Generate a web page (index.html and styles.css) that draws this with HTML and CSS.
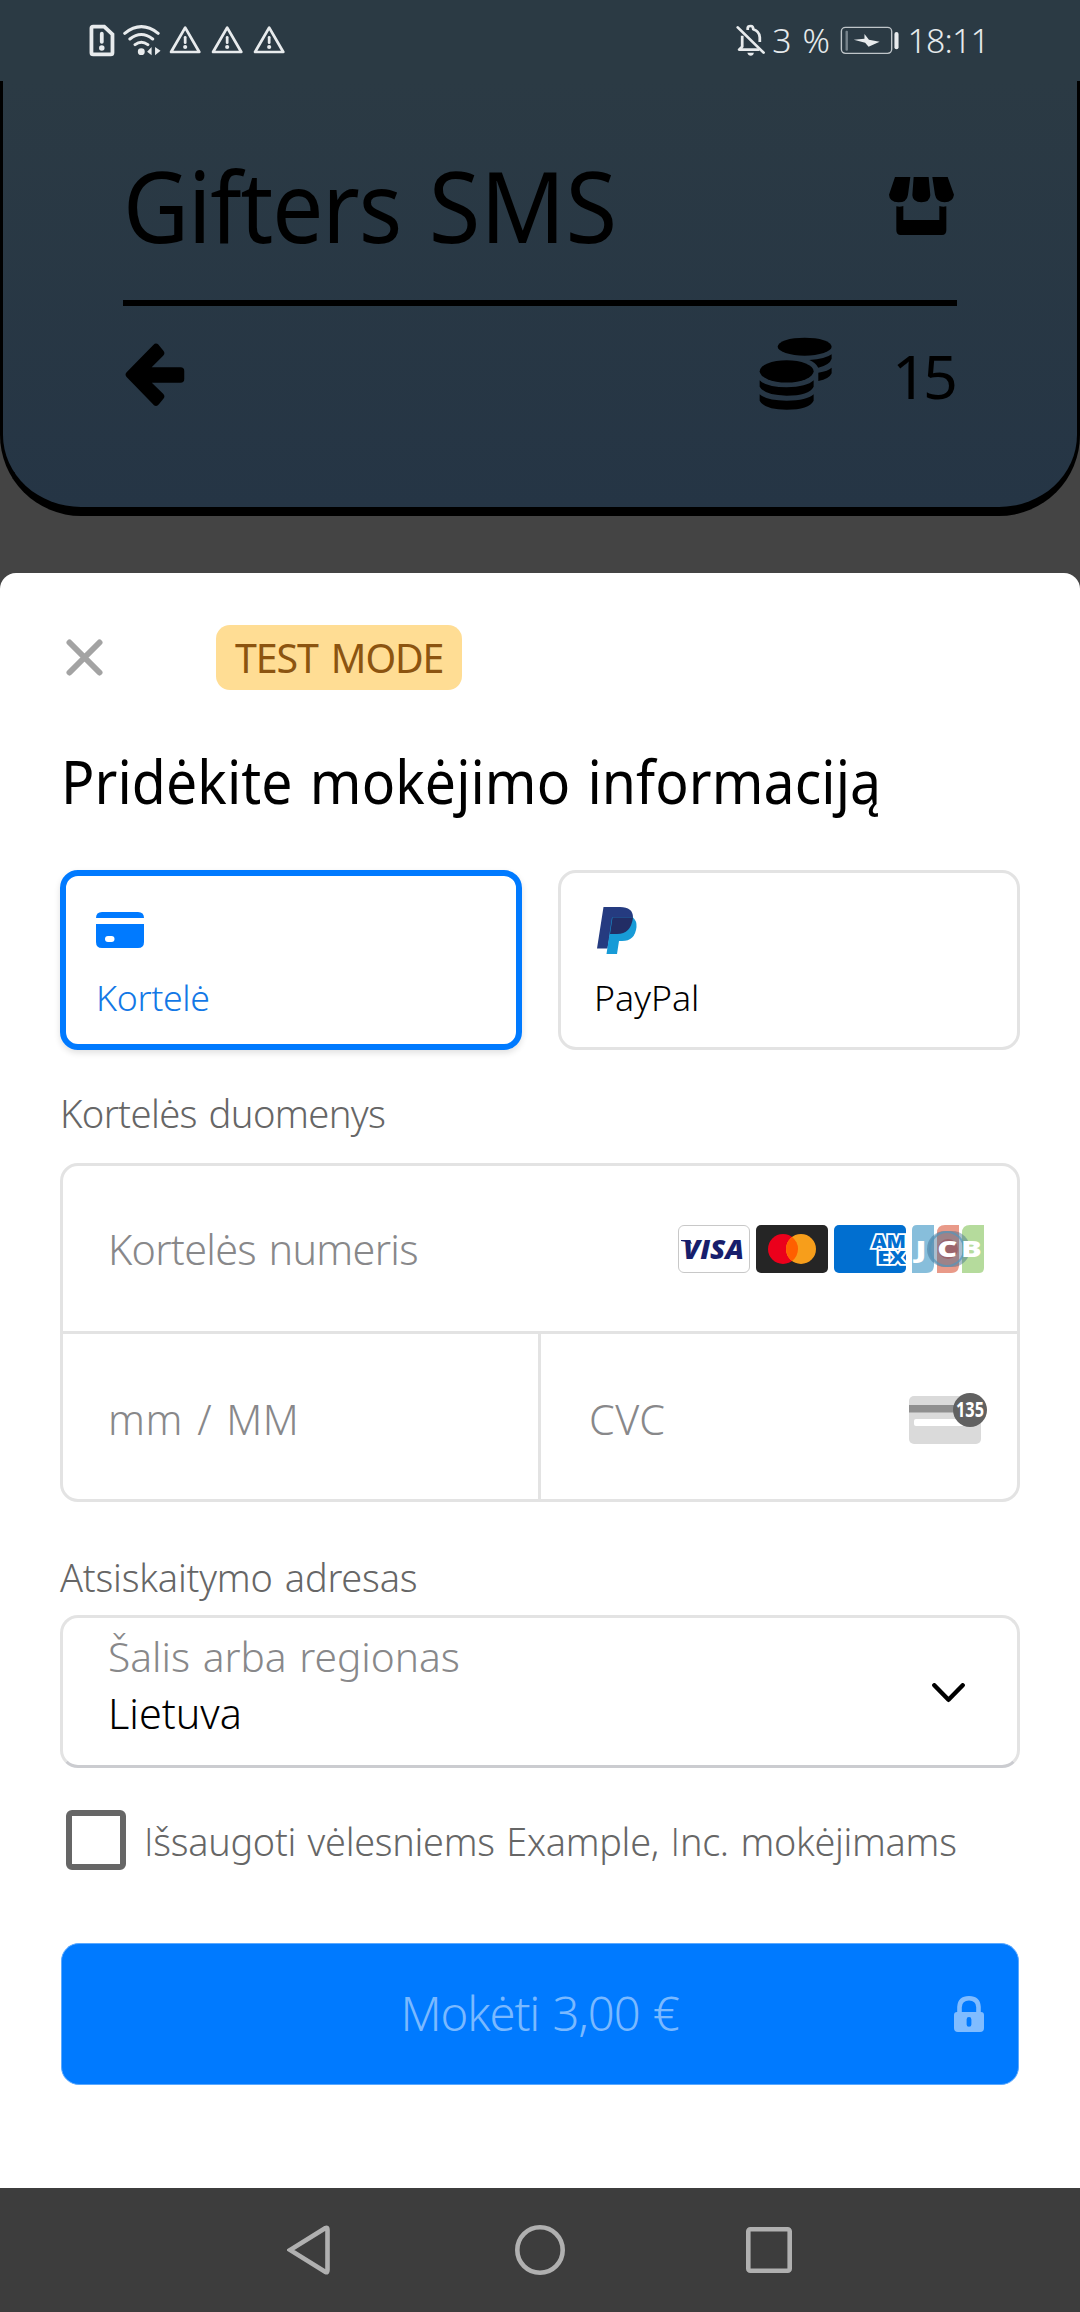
FILE: index.html
```html
<!DOCTYPE html>
<html lang="lt">
<head>
<meta charset="utf-8">
<title>Gifters SMS</title>
<link rel="stylesheet" href="styles.css">
</head>
<body>
<div class="screen">
  <div class="statusbar">
    <div class="status-left">
      <svg class="s-sim" viewBox="255 60 85 120" preserveAspectRatio="none" fill="none" stroke="#e8ebed"><path d="M270 80H302L326 103V158Q326 163 321 163H270Q265 163 265 158V85Q265 80 270 80Z" stroke-width="11"/><path d="M295 101V126" stroke-width="11" stroke-linecap="round"/><circle cx="295" cy="144" r="8" fill="#e8ebed" stroke="none"/></svg>
      <svg class="s-wifi" viewBox="355 60 115 120" preserveAspectRatio="none" fill="none" stroke="#e8ebed" stroke-width="9" stroke-linecap="round"><path d="M363 100Q411 60 460 100M378 117Q411 90 444 117M393 134Q411 120 430 134"/><circle cx="411" cy="155" r="10" fill="#e8ebed" stroke="none"/><path d="M441 141V166L428 155ZM451 141L467 152L451 166Z" fill="#e8ebed" stroke="none"/></svg>
      <svg class="s-warn" viewBox="490 60 95 120" preserveAspectRatio="none" fill="none" stroke="#e8ebed" stroke-width="8" stroke-linejoin="round"><path d="M537 83L496 156H578Z"/><path d="M537 112V128" stroke-linecap="round"/><circle cx="537" cy="141" r="6" fill="#e8ebed" stroke="none"/></svg>
      <svg class="s-warn" viewBox="490 60 95 120" preserveAspectRatio="none" fill="none" stroke="#e8ebed" stroke-width="8" stroke-linejoin="round"><path d="M537 83L496 156H578Z"/><path d="M537 112V128" stroke-linecap="round"/><circle cx="537" cy="141" r="6" fill="#e8ebed" stroke="none"/></svg>
      <svg class="s-warn" viewBox="490 60 95 120" preserveAspectRatio="none" fill="none" stroke="#e8ebed" stroke-width="8" stroke-linejoin="round"><path d="M537 83L496 156H578Z"/><path d="M537 112V128" stroke-linecap="round"/><circle cx="537" cy="141" r="6" fill="#e8ebed" stroke="none"/></svg>
    </div>
    <div class="status-right">
      <svg class="s-bell" viewBox="570 60 85 120" preserveAspectRatio="none" fill="none" stroke="#e8ebed" stroke-width="8"><path d="M575 82L650 158" stroke-linecap="round"/><path d="M604 90V84Q604 78 613 78Q620 78 620 88Q638 94 639 112V126M588 107V140L579 149H638" stroke-linejoin="round"/><path d="M603 158H622Q620 167 613 167Q605 167 603 158Z" fill="#e8ebed" stroke="none"/></svg>
      <span class="s-pct">3 %</span>
      <svg class="s-batt" viewBox="872 60 173 120" preserveAspectRatio="none"><rect x="876" y="82" width="146" height="78" rx="12" fill="none" stroke="#bfc5c9" stroke-width="4"/><rect x="888" y="92" width="7" height="60" rx="3" fill="#78848c"/><path d="M943 102L956 119L987 125L955 140L945 128L912 119L943 116Z" fill="#e8ebed"/><rect x="1030" y="96" width="12" height="52" rx="6" fill="#e8ebed"/></svg>
      <span class="s-time">18:11</span>
    </div>
  </div>

  <header class="header">
    <div class="header-top">
      <h1 class="title"><span class="title-name">Gifters</span> <span class="title-sms">SMS</span></h1>
      <svg class="shop" viewBox="746 231 195 174"><path d="M764 231H810L803 284Q800 307 774 307Q747 305 746 284ZM820 231H865L870 286Q868 307 843 307Q817 306 816 286ZM876 231H922L941 284Q938 306 913 307Q888 306 884 284ZM768 319Q779 322 789 318V360H897V318Q908 322 918 319V391Q918 405 905 405H781Q768 405 768 391Z"/></svg>
    </div>
    <div class="header-bottom">
      <svg class="back" viewBox="124 341 64 68"><path d="M130.500 374.700L157 347.500L161.500 353L143.500 371H181.500V379H143.500L161.500 396.500L157 402Z" stroke="#000" stroke-width="7.500" stroke-linejoin="round"/></svg>
      <div class="balance">
        <svg class="coins" viewBox="355 712 220 220"><ellipse cx="492" cy="741" rx="81" ry="27"/><path d="M573 764V777Q568 795 533 804Q525 789 506 781Q555 778 573 764ZM573 804V821Q566 838 533 844V819Q563 814 573 804Z"/><ellipse cx="438" cy="815" rx="81" ry="33.500"/><path d="M357 842Q378 863 438 863Q499 862 519 842V861Q505 888 438 888Q371 887 357 861ZM357 884Q378 903 438 903Q499 903 519 884V903Q505 930 438 930Q371 930 357 903Z"/></svg>
        <span class="count">15</span>
      </div>
    </div>
  </header>

  <main class="sheet">
    <div class="sheet-bar">
      <svg class="close" viewBox="0 0 37 37"><path d="M3.500 3.500L33.500 33.500M33.500 3.500L3.500 33.500"/></svg>
      <span class="badge">TEST MODE</span>
    </div>
    <h2 class="heading">Pridėkite mokėjimo informaciją</h2>

    <div class="tabs">
      <div class="tab tab-active">
        <div class="tab-icon"><svg width="48" height="36" viewBox="0 0 48 36"><path d="M0 6Q0 0 6 0H42Q48 0 48 6ZM0 12H48V30Q48 36 42 36H6Q0 36 0 30Z" fill="#007aff"/><rect x="9" y="24" width="9.500" height="6" rx="3" fill="#fff"/></svg></div>
        <span class="tab-label">Kortelė</span>
      </div>
      <div class="tab">
        <div class="tab-icon"><svg class="pp" width="40" height="47" viewBox="0 0 40 47"><path d="M6.500 0H23Q36 0 36 10.500Q34 27 20 27H13L10.500 41.500H0Z" fill="#253b80"/><path d="M15 10.500H36Q40 14 39.500 20Q38 34 25 34H22L20 47H9.500Z" fill="#179bd7"/><path d="M15.500 10.500H36Q34 27 20 27H13Z" fill="#222d65"/></svg></div>
        <span class="tab-label">PayPal</span>
      </div>
    </div>

    <div class="label label-card">Kortelės duomenys</div>
    <div class="cardform">
      <div class="field field-number">
        <span class="ph ph-number">Kortelės numeris</span>
        <div class="brands">
          <svg width="72" height="48" viewBox="0 0 72 48"><rect x=".5" y=".5" width="71" height="47" rx="5.500" fill="#fff" stroke="#c8c8c8"/><text x="5" y="34" class="visa" textLength="61" lengthAdjust="spacingAndGlyphs">VISA</text><path d="M3 15H12L14 19Q9 16.500 3 16Z" fill="#171e6c"/></svg>
          <svg width="72" height="48" viewBox="0 0 72 48"><rect width="72" height="48" rx="5" fill="#252525"/><circle cx="27" cy="24" r="15" fill="#eb001b"/><circle cx="45" cy="24" r="15" fill="#f79e1b"/><path d="M36 12A15 15 0 0 1 36 36A15 15 0 0 1 36 12Z" fill="#ff5f00"/></svg>
          <svg width="72" height="48" viewBox="0 0 72 48"><rect width="72" height="48" rx="5" fill="#016fd0"/><g class="amex"><text x="38" y="23" textLength="34" lengthAdjust="spacingAndGlyphs">AM</text><text x="43" y="38.500" textLength="29" lengthAdjust="spacingAndGlyphs">EX</text></g></svg>
          <svg width="72" height="48" viewBox="0 0 72 48"><path d="M5 0H22V40Q22 48 14 48H0V5Q0 0 5 0Z" fill="#87bedb"/><path d="M33 0H47V40Q47 48 39 48H25V8Q25 0 33 0Z" fill="#e99a89"/><path d="M58 0H72V43Q72 48 67 48H50V8Q50 0 58 0Z" fill="#b5db9c"/><rect x="15" y="6" width="43" height="36" rx="18" fill="#35658a" opacity=".42"/><circle cx="35" cy="24" r="17" fill="none" stroke="#5495bb" stroke-width="2" opacity=".7"/><circle cx="36" cy="24" r="10" fill="#9d4047" opacity=".45"/><text x="2.500 18 35" y="32" class="jcb" transform="scale(1.4 1)">JCB</text></svg>
        </div>
      </div>
      <div class="field-row">
        <div class="field field-expiry"><span class="ph ph-expiry">mm / MM</span></div>
        <div class="field field-cvc">
          <span class="ph ph-cvc">CVC</span>
          <svg width="78" height="51" viewBox="0 0 78 51"><rect y="3" width="72" height="48" rx="5" fill="#dadada"/><rect y="12" width="72" height="7.500" fill="#8f8f8f"/><rect x="5" y="26" width="50" height="7" rx="2" fill="#fff"/><circle cx="61" cy="17" r="17" fill="#616161"/><text x="61" y="24" class="cvc-num" textLength="28" lengthAdjust="spacingAndGlyphs">135</text></svg>
        </div>
      </div>
    </div>

    <div class="label label-address">Atsiskaitymo adresas</div>
    <div class="country">
      <div class="country-text">
        <span class="country-label">Šalis arba regionas</span>
        <span class="country-value">Lietuva</span>
      </div>
      <svg class="chevron" width="33" height="20" viewBox="0 0 33 20"><path d="M2.300 2.300L16.500 16.800L30.700 2.300" fill="none" stroke="#000" stroke-width="4.400" stroke-linecap="round" stroke-linejoin="round"/></svg>
    </div>

    <div class="save">
      <span class="checkbox"></span>
      <span class="save-text"><span class="cap">I</span>šsaugoti vėlesniems Example, <span class="cap">I</span>nc. mokėjimams</span>
    </div>

    <div class="pay">
      <span class="pay-text">Mokėti 3,00 €</span>
      <svg class="lock" width="30" height="36" viewBox="0 0 30 36"><path d="M5.500 18V11Q6 2.300 15 2.300Q24 2.300 24.500 11V18" fill="none" stroke="#80bcff" stroke-width="4.600"/><path fill-rule="evenodd" d="M3 16H27Q30 16 30 19V32Q30 36 26 36H4Q0 36 0 32V19Q0 16 3 16ZM15 21A2.400 2.400 0 0 0 12.600 23.400V28.400A2.400 2.400 0 0 0 17.400 28.400V23.400A2.400 2.400 0 0 0 15 21Z" fill="#80bcff"/></svg>
    </div>
  </main>

  <nav class="navbar">
    <svg class="nav-back" width="43" height="50" viewBox="0 0 43 50"><path d="M38.500 3L3 25L38.500 47Q40.500 48 40.500 45V5Q40.500 2 38.500 3Z"/></svg>
    <svg class="nav-home" width="50" height="50" viewBox="0 0 50 50"><circle cx="25" cy="25" r="22.700"/></svg>
    <svg width="46" height="46" viewBox="0 0 46 46"><rect x="2.300" y="2.300" width="41.400" height="41.400" rx="2"/></svg>
  </nav>
</div>
</body>
</html>
```
FILE: styles.css
```css
* { box-sizing: border-box; }

body {
  margin: 0;
  font-family: "Noto Sans", "Open Sans", sans-serif;
  font-weight: 300;
  background: #444;
}

svg { display: block; flex: none; }
h1, h2 { margin: 0; font-weight: 400; }
span, h1, h2, .label { white-space: nowrap; }

.screen {
  width: 1080px;
  height: 2312px;
  display: flex;
  flex-direction: column;
  overflow: hidden;
  background: #444;
}

/* status bar */
.statusbar {
  height: 81px;
  flex: none;
  padding: 20px 0 0 88px;
  display: flex;
  background: #2b3a44;
  color: #e6eaec;
  font-size: 33.800px;
  line-height: 40px;
}
.status-left { width: 648px; display: flex; }
.status-left svg, .status-right svg { height: 40px; }
.s-sim { width: 29.300px; margin-right: 5.200px; }
.s-wifi { width: 39.600px; margin-right: 6.900px; }
.s-warn { width: 32.700px; margin-right: 9.300px; }
.status-right { display: flex; }
.s-bell { width: 29.300px; }
.s-pct { width: 74.700px; padding-left: 7px; letter-spacing: 0.300px; word-spacing: 1.500px; }
.s-batt { width: 59.600px; }
.s-time { padding-left: 8px; letter-spacing: -0.800px; }

/* dimmed app header */
.header {
  height: 435px;
  flex: none;
  border: 3px solid #000;
  border-top: 0;
  border-bottom-width: 9px;
  border-radius: 0 0 81px 81px;
  padding: 0 120px;
  background: linear-gradient(#2b3a44, #253545);
  color: #000;
}
.header-top {
  height: 225px;
  padding-top: 74px;
  border-bottom: 6px solid #000;
  display: flex;
  justify-content: space-between;
  align-items: flex-start;
}
.title {
  font-size: 98.600px;
  line-height: 100px;
  word-spacing: 4px;
  transform: scaleX(0.921);
  transform-origin: left;
}
.title-name { letter-spacing: -1.200px; }
.title-sms { display: inline-block; transform: scaleX(1.035); transform-origin: left; }
.shop { width: 65px; height: 58px; margin: 22px 3px 0 0; }
.header-bottom { display: flex; justify-content: space-between; }
.back { width: 64px; height: 68px; margin-top: 35px; }
.balance { display: flex; padding: 31px 3px 0 0; gap: 60px; }
.coins { width: 73.300px; height: 73.300px; }
.count {
  font-size: 61.100px;
  font-weight: 400;
  line-height: 60px;
  margin-top: 9px;
  letter-spacing: -3.900px;
}

/* payment sheet */
.sheet {
  height: 1615px;
  flex: none;
  margin-top: 57px;
  padding: 52px 60px 0;
  border-radius: 16px 16px 0 0;
  background: #fff;
  display: flex;
  flex-direction: column;
}
.sheet-bar { display: flex; align-items: center; height: 65px; }
.close { width: 37px; height: 37px; margin-left: 5.500px; fill: none; stroke: #a3a3a3; stroke-width: 6; stroke-linecap: round; }
.badge {
  width: 246px;
  height: 65px;
  margin-left: 113.500px;
  padding-left: 19px;
  border-radius: 14px;
  background: #ffdd94;
  color: #8c5410;
  font-size: 39.300px;
  font-weight: 400;
  line-height: 66px;
  letter-spacing: -1.100px;
  word-spacing: 4px;
}
.heading {
  margin: 51px 0 0 1px;
  font-size: 60.400px;
  line-height: 80px;
  word-spacing: 3px;
  letter-spacing: 0.100px;
  transform: scaleX(0.916);
  transform-origin: left;
}

.tabs { display: grid; grid-template-columns: 1fr 1fr; gap: 36px; margin-top: 49px; }
.tab { height: 180px; padding: 33px; border: 3px solid #e3e3e3; border-radius: 18px; }
.tab-active { padding: 30px; border: 6px solid #007aff; box-shadow: 0 3px 6px rgba(0, 0, 0, 0.120); }
.tab-icon { height: 48px; margin-bottom: 23px; display: flex; align-items: center; }
.pp { margin-left: 3px; }
.tab-label { display: block; font-size: 35.700px; line-height: 40px; color: #000; }
.tab-active .tab-label { color: #1378e6; letter-spacing: -0.330px; }

.label { color: #666; line-height: 40px; }
.label-card { margin-top: 43px; font-size: 38.200px; letter-spacing: -0.650px; word-spacing: 2.500px; }
.cardform { height: 339px; margin-top: 30px; border: 3px solid #e3e3e3; border-radius: 18px; }
.field { height: 165px; display: flex; align-items: center; justify-content: space-between; }
.field-number { padding: 0 33px 0 45px; }
.ph { font-size: 41.300px; line-height: 40px; color: #88888a; }
.ph-number { letter-spacing: -0.700px; word-spacing: 2.500px; }
.ph-expiry { letter-spacing: 0.700px; word-spacing: 2.500px; }
.ph-cvc { letter-spacing: 0.400px; }
.brands { display: flex; gap: 6px; }
.visa { font: italic 800 27px "Open Sans", sans-serif; fill: #171e6c; }
.amex { font: 800 18px "Open Sans", sans-serif; fill: #016fd0; stroke: #fff; stroke-width: 3.500px; paint-order: stroke; }
.jcb { font: 800 22px "Open Sans", sans-serif; fill: #fff; }
.field-row { display: grid; grid-template-columns: 478px 1fr; border-top: 3px solid #e3e3e3; }
.field-expiry { padding: 5px 0 0 45px; border-right: 3px solid #e3e3e3; }
.field-cvc { padding: 3px 30px 0 48px; }
.ph-cvc { padding-top: 2px; }
.cvc-num { font: 700 21px "Noto Sans", sans-serif; fill: #fff; text-anchor: middle; }

.label-address { margin-top: 55px; font-size: 37.900px; letter-spacing: -0.200px; word-spacing: 2.500px; }
.country {
  height: 153px;
  margin-top: 18px;
  padding: 0 52px 0 45px;
  border: 3px solid #e3e3e3;
  border-bottom-color: #cbccd0;
  border-radius: 18px;
  display: flex;
  align-items: center;
  justify-content: space-between;
}
.country-text { display: flex; flex-direction: column; line-height: 57px; margin-top: -13px; }
.country-label { font-size: 40.700px; color: #88888a; word-spacing: 2px; }
.country-value { font-size: 41.300px; color: #000; }
.chevron { margin-top: 2px; }

.save { display: flex; align-items: center; margin-top: 42px; height: 60px; }
.checkbox { width: 60px; height: 60px; margin-left: 6px; border: 6px solid #666; border-radius: 6px; }
.save-text { margin-left: 18px; font-size: 37.800px; line-height: 40px; color: #666; letter-spacing: -0.260px; word-spacing: 2px; padding-top: 4px; }
.cap { font-family: "Open Sans", sans-serif; }

.pay {
  height: 142px;
  margin: 73px 1px 0;
  padding-right: 34px;
  border: 1px solid #5ba9ff;
  border-radius: 18px;
  background: #007aff;
  display: grid;
  grid-template-columns: 1fr auto 1fr;
  align-items: center;
}
.pay-text { grid-column: 2; margin: -3px 0 0 33px; font-size: 47.200px; line-height: 60px; color: #7ab9ff; letter-spacing: -1.100px; word-spacing: 2px; }
.lock { justify-self: end; }

/* system navigation */
.navbar {
  height: 124px;
  flex: none;
  padding-left: 287px;
  display: flex;
  align-items: center;
  background: #3d3d3d;
}
.navbar svg { fill: none; stroke: #b0b0b0; stroke-width: 4.600; }
.nav-back { margin-right: 185px; }
.nav-home { margin-right: 181px; }
```
